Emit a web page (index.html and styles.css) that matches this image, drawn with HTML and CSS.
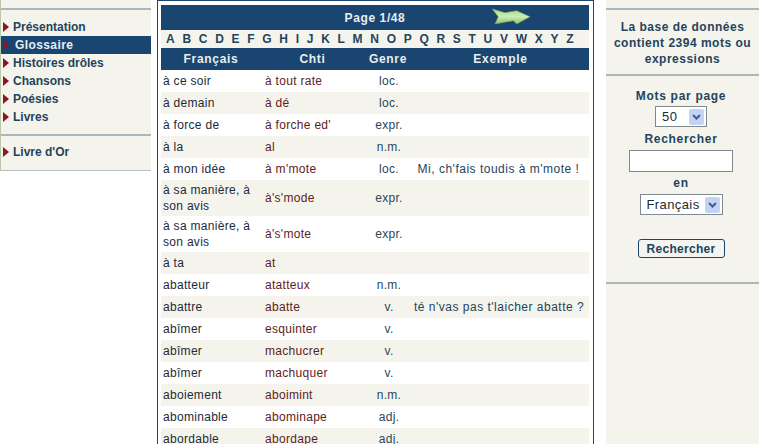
FILE: index.html
```html
<!DOCTYPE html>
<html lang="fr">
  <head>
    <meta charset="UTF-8" />
    <title>Glossaire</title>
    <link rel="stylesheet" href="styles.css">
  </head>
  <body>
    <div class="page">
      <nav class="left">
        <ul class="menu">
          <li><a href="#">Présentation</a></li>
          <li class="current"><a href="#">Glossaire</a></li>
          <li><a href="#">Histoires drôles</a></li>
          <li><a href="#">Chansons</a></li>
          <li><a href="#">Poésies</a></li>
          <li><a href="#">Livres</a></li>
        </ul>
        <ul class="menu second">
          <li><a href="#">Livre d'Or</a></li>
        </ul>
      </nav>

      <main class="center">
        <div class="pager">
          <span>Page 1/48</span>
          <svg class="next" width="42" height="20" viewBox="0 0 42 20">
            <defs>
              <linearGradient id="arrow-fill" x1="0" y1="0" x2="0" y2="1">
                <stop offset="0" stop-color="#a9d68e" />
                <stop offset="0.5" stop-color="#cdeeaf" />
                <stop offset="1" stop-color="#8cc276" />
              </linearGradient>
            </defs>
            <path d="M2.3 2 L15 5.7 L26.7 3.7 L40 9.7 L26.7 17 L23.3 13.7 L5 17 L8.3 9.7 Z" fill="url(#arrow-fill)" stroke="#6fa76d" stroke-width=".6" />
          </svg>
        </div>
        <div class="letters">
          <a href="#">A</a><a href="#">B</a><a href="#">C</a><a href="#">D</a><a href="#">E</a><a href="#">F</a><a href="#">G</a><a href="#">H</a><a href="#">I</a><a href="#">J</a><a href="#">K</a><a href="#">L</a><a href="#">M</a><a href="#">N</a><a href="#">O</a><a href="#">P</a><a href="#">Q</a><a href="#">R</a><a href="#">S</a><a href="#">T</a><a href="#">U</a><a href="#">V</a><a href="#">W</a><a href="#">X</a><a href="#">Y</a><a href="#">Z</a>
        </div>
        <table class="words">
          <colgroup>
            <col class="c-fr" /><col class="c-chti" /><col class="c-genre" /><col />
          </colgroup>
          <thead>
            <tr><th>Français</th><th class="shifted">Chti</th><th class="shifted">Genre</th><th>Exemple</th></tr>
          </thead>
          <tbody>
            <tr><td>à ce soir</td><td class="chti">à tout rate</td><td class="genre">loc.</td><td></td></tr>
            <tr><td>à demain</td><td class="chti">à dé</td><td class="genre">loc.</td><td></td></tr>
            <tr><td>à force de</td><td class="chti">à forche ed'</td><td class="genre">expr.</td><td></td></tr>
            <tr><td>à la</td><td class="chti">al</td><td class="genre">n.m.</td><td></td></tr>
            <tr><td>à mon idée</td><td class="chti">à m'mote</td><td class="genre">loc.</td><td class="ex">Mi, ch'fais toudis à m'mote !</td></tr>
            <tr><td>à sa manière, à son avis</td><td class="chti">à's'mode</td><td class="genre">expr.</td><td></td></tr>
            <tr><td>à sa manière, à son avis</td><td class="chti">à's'mote</td><td class="genre">expr.</td><td></td></tr>
            <tr><td>à ta</td><td class="chti">at</td><td class="genre"></td><td></td></tr>
            <tr><td>abatteur</td><td class="chti">atatteux</td><td class="genre">n.m.</td><td></td></tr>
            <tr><td>abattre</td><td class="chti">abatte</td><td class="genre">v.</td><td class="ex">té n'vas pas t'laicher abatte ?</td></tr>
            <tr><td>abîmer</td><td class="chti">esquinter</td><td class="genre">v.</td><td></td></tr>
            <tr><td>abîmer</td><td class="chti">machucrer</td><td class="genre">v.</td><td></td></tr>
            <tr><td>abîmer</td><td class="chti">machuquer</td><td class="genre">v.</td><td></td></tr>
            <tr><td>aboiement</td><td class="chti">aboimint</td><td class="genre">n.m.</td><td></td></tr>
            <tr><td>abominable</td><td class="chti">abominape</td><td class="genre">adj.</td><td></td></tr>
            <tr><td>abordable</td><td class="chti">abordape</td><td class="genre">adj.</td><td></td></tr>
          </tbody>
        </table>
      </main>

      <aside class="right">
        <p class="stats">La base de données contient 2394 mots ou expressions</p>
        <form class="search">
          <label>Mots par page</label>
          <span class="select select-small">
            <select><option>50</option></select>
            <svg width="15" height="16" viewBox="0 0 15 16"><rect width="15" height="16" rx="2" fill="#c3d3f3" /><path d="M4 6 L7.5 9.5 L11 6" fill="none" stroke="#3f5a92" stroke-width="2" /></svg>
          </span>
          <label>Rechercher</label>
          <input type="text" />
          <label>en</label>
          <span class="select select-lang">
            <select><option>Français</option></select>
            <svg width="15" height="16" viewBox="0 0 15 16"><rect width="15" height="16" rx="2" fill="#c3d3f3" /><path d="M4 6 L7.5 9.5 L11 6" fill="none" stroke="#3f5a92" stroke-width="2" /></svg>
          </span>
          <button type="button">Rechercher</button>
        </form>
      </aside>
    </div>
  </body>
</html>
```

FILE: styles.css
```css
html,
body {
  margin: 0;
  height: 444px;
  overflow: hidden;
  background-color: white;
}

body {
  font-family: "Liberation Sans", Arial, sans-serif;
  font-size: 12px;
  letter-spacing: 0.3px;
  color: #1b2b38;
}

.page {
  display: flex;
  align-items: flex-start;
  height: 444px;
}

/* left menu */

.left {
  flex: none;
  box-sizing: border-box;
  width: 151px;
  height: 171px;
  padding-top: 8px;
  background-color: #f5f4ec;
  border-left: 1px solid #b8c8a8;
  border-bottom: 1px solid #b4c2c8;
}

.menu {
  list-style: none;
  margin: 0;
  padding: 8px 0;
  border-top: 2px solid #aab8bc;
}

.menu li {
  height: 18px;
  line-height: 18px;
}

.menu a {
  display: block;
  padding-left: 12px;
  color: #24435c;
  font-weight: bold;
  letter-spacing: 0;
  text-decoration: none;
  position: relative;
}

.menu a::before {
  content: "";
  position: absolute;
  left: 2px;
  top: 4px;
  border-left: 6px solid #8c1528;
  border-top: 5px solid transparent;
  border-bottom: 5px solid transparent;
}

.menu .current a {
  background-color: #1a4570;
  color: #e8eef2;
  padding-left: 14px;
  letter-spacing: 0.4px;
}

.second {
  padding-top: 7px;
}

/* centre */

.center {
  flex: none;
  width: 428px;
  height: 440px;
  margin-left: 6px;
  padding: 4px 4px 0 3px;
  border: 1px solid #1a4570;
  border-bottom: 0;
  overflow: hidden;
}

.pager {
  display: flex;
  align-items: center;
  justify-content: center;
  height: 25px;
  background-color: #1a4570;
  color: #e8eef2;
  font-weight: bold;
  letter-spacing: 0.6px;
  position: relative;
}

.next {
  position: absolute;
  left: 329px;
  top: 2px;
}

.letters {
  display: flex;
  justify-content: space-between;
  align-items: center;
  height: 18px;
  padding: 0 15px 0 5px;
  background-color: #f5f4ec;
}

.letters a {
  color: #24435c;
  font-weight: bold;
  text-decoration: none;
}

.words {
  width: 428px;
  table-layout: fixed;
  border-collapse: collapse;
}

.c-fr {
  width: 100px;
}

.c-chti {
  width: 93px;
}

.c-genre {
  width: 58px;
}

.words th {
  height: 22px;
  padding: 0;
  background-color: #1a4570;
  color: #e8eef2;
  font-weight: bold;
  letter-spacing: 0.7px;
}

.words th.shifted {
  padding-left: 10px;
}

.words td {
  height: 18px;
  padding: 2px;
  line-height: 16px;
}

.words tbody tr:nth-child(even) {
  background-color: #f5f4ec;
}

.chti {
  color: #5e1c1c;
}

.words td.chti {
  padding-left: 4px;
}

.words td.genre {
  padding-left: 12px;
  padding-right: 0;
  text-align: center;
  color: #2c4658;
}

.words td.ex {
  padding-right: 6px;
  text-align: center;
  color: #24435c;
  letter-spacing: 0.5px;
  white-space: nowrap;
}

/* right column */

.right {
  flex: none;
  box-sizing: border-box;
  width: 153px;
  height: 444px;
  margin-left: 12px;
  padding-top: 8px;
  background-color: #f5f4ec;
  color: #24435c;
  text-align: center;
  font-weight: bold;
}

.stats {
  margin: 0;
  padding: 9px 6px 7px;
  line-height: 16px;
  letter-spacing: 0.5px;
  border-top: 2px solid #aab8bc;
  border-bottom: 2px solid #aab8bc;
}

.search {
  display: flex;
  flex-direction: column;
  align-items: center;
  padding: 0 3px 24px 0;
  border-bottom: 2px solid #aab8bc;
}

.search label {
  height: 18px;
  margin: 2px 0;
  line-height: 18px;
  letter-spacing: 0.7px;
}

.search label:first-child {
  margin-top: 11px;
}

.select {
  position: relative;
  display: block;
  height: 21px;
}

.select select {
  appearance: none;
  display: block;
  height: 21px;
  padding: 0 0 0 6px;
  border: 1px solid #7f8a90;
  border-radius: 0;
  background-color: white;
  font-family: inherit;
  font-size: 13px;
  letter-spacing: 0.4px;
  color: #1b2b38;
}

.select svg {
  position: absolute;
  right: 3px;
  top: 3px;
}

.select-small {
  margin: -1px 0 1px;
}

.select-small select {
  width: 52px;
}

.select-lang select {
  width: 83px;
}

.search input {
  width: 104px;
  height: 22px;
  padding: 0;
  box-sizing: border-box;
  border: 1px solid #7f8a90;
  background-color: white;
}

.search button {
  width: 87px;
  height: 19px;
  margin-top: 24px;
  padding: 0;
  border: 1px solid #1a4570;
  border-radius: 3px;
  background-color: #f4f4f0;
  color: #24435c;
  font-family: inherit;
  font-size: 12px;
  font-weight: bold;
  letter-spacing: 0.3px;
}
```
